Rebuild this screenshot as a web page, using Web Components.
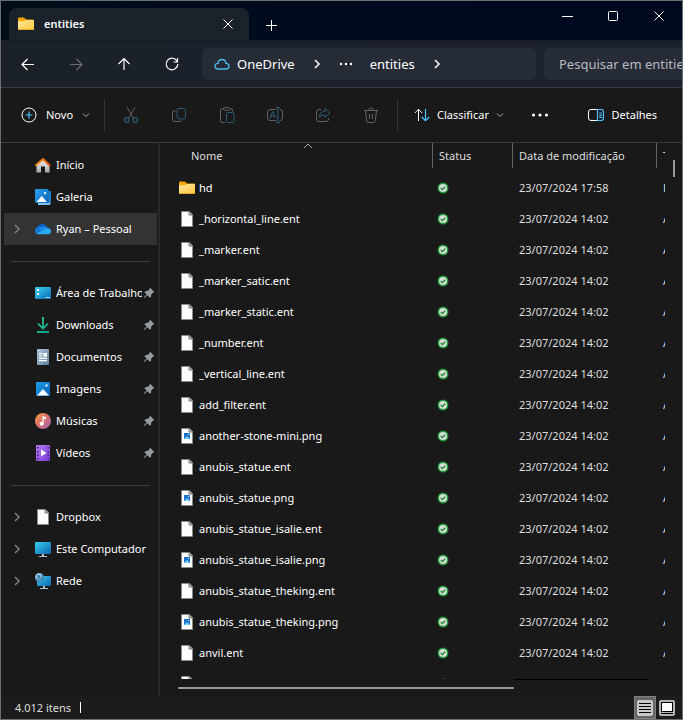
<!DOCTYPE html>
<html lang="pt-BR">
<head>
<meta charset="utf-8">
<title>entities</title>
<style>
  html, body { margin: 0; height: 100%; background: #191919; }
  body { font: 11px/16px "Noto Sans", "Open Sans", sans-serif; color: #fff; }
</style>
</head>
<body>
<explorer-window>
  <title-bar slot="title" label="entities"></title-bar>
  <address-bar slot="address"></address-bar>
  <command-bar slot="commands"></command-bar>
  <side-nav slot="side">
    <nav-item icon="home">Início</nav-item>
    <nav-item icon="gallery">Galeria</nav-item>
    <nav-item icon="onedrive" expandable selected>Ryan – Pessoal</nav-item>
    <hr>
    <nav-item icon="desktop" pinned>Área de Trabalho</nav-item>
    <nav-item icon="download" pinned>Downloads</nav-item>
    <nav-item icon="document" pinned>Documentos</nav-item>
    <nav-item icon="image" pinned>Imagens</nav-item>
    <nav-item icon="music" pinned>Músicas</nav-item>
    <nav-item icon="video" pinned>Vídeos</nav-item>
    <hr>
    <nav-item icon="file" expandable>Dropbox</nav-item>
    <nav-item icon="computer" expandable>Este Computador</nav-item>
    <nav-item icon="network" expandable>Rede</nav-item>
  </side-nav>
  <file-list slot="main"></file-list>
  <status-bar slot="status">4.012 itens</status-bar>
</explorer-window>

<script>
const ICONS = {
  folder: [16, `<defs><linearGradient id="g" x1="0" y1="0" x2="1" y2="1"><stop offset="0" stop-color="#ffe9a2"/><stop offset="1" stop-color="#ffc83a"/></linearGradient></defs><path fill="#f2a600" d="M0 2.500Q0 1.500 1 1.500H6L8 3.500H15Q16 3.500 16 4.500V8H0Z"/><path fill="url(#g)" d="M0 6Q0 5.200 1 5.200H6L7.500 4H15Q16 4 16 5V13Q16 14 15 14H1Q0 14 0 13Z"/><path stroke="#e8a92c" d="M1 13.500H15"/>`],
  close: [12, `<path d="M1.500 1.500L10.500 10.500M10.500 1.500L1.500 10.500"/>`],
  plus: [12, `<path d="M6.500 1V12M1 6.500H12"/>`],
  min: [12, `<path d="M1 6.500H12"/>`],
  max: [12, `<rect x="1.500" y="1.500" width="9" height="9" rx="1"/>`],
  back: [16, `<path stroke-width="1.200" d="M14 8.500H2.500M7.500 3L2 8.500L7.500 14"/>`],
  forward: [16, `<path stroke-width="1.200" d="M2 8.500H13.500M8.500 3L14 8.500L8.500 14"/>`],
  up: [16, `<path stroke-width="1.200" d="M8 14V2.500M2.500 8L8 2.500L13.500 8"/>`],
  refresh: [16, `<path stroke-width="1.200" d="M13.200 5.400A5.800 5.800 0 1 0 13.800 8M13.500 2V6H9.500"/>`],
  cloud: [16, `<path stroke="#4cb8f0" stroke-width="1.300" d="M4.300 13C2.300 13 1 11.800 1 10.200S2.300 7.500 4 7.400C4.300 5 6 3.500 8 3.500S11.700 5 12 7.400C13.700 7.500 15 8.600 15 10.200S13.700 13 11.700 13Z"/>`],
  right: [10, `<path stroke-width="1.500" d="M3 1L7 5L3 9"/>`],
  down: [8, `<path d="M1 2.500L4 5.500L7 2.500"/>`],
  caret: [10, `<path d="M1 7L5 3L9 7"/>`],
  dots: [16, `<g fill="currentColor" stroke="none"><circle cx="3" cy="8" r="1.200"/><circle cx="8" cy="8" r="1.200"/><circle cx="13" cy="8" r="1.200"/></g>`],
  more: [18, `<g fill="currentColor" stroke="none"><circle cx="2.500" cy="9" r="1.600"/><circle cx="9" cy="9" r="1.600"/><circle cx="15.500" cy="9" r="1.600"/></g>`],
  new: [16, `<circle cx="8" cy="8" r="7"/><path stroke="#4cc2ff" stroke-width="1.200" d="M8 4.500V11.500M4.500 8H11.500"/>`],
  cut: [16, `<path d="M4 .5L10.300 11M12 .5L5.700 11"/><g stroke="#2d5d78" stroke-width="1.200"><circle cx="3.800" cy="13" r="2.300"/><circle cx="12.200" cy="13" r="2.300"/></g>`],
  copy: [16, `<path d="M4.500 4H3Q1.500 4 1.500 5.500V12Q1.500 14.500 4 14.500H8.500Q10 14.500 10.300 13"/><rect stroke="#2d5d78" x="6" y="1.500" width="8.500" height="10.500" rx="2"/>`],
  paste: [16, `<path d="M4.500 2H2.500Q1.500 2 1.500 3V14Q1.500 15.500 3 15.500H6M11 2H12.500Q13.500 2 13.500 3V4.500"/><rect x="4.500" y=".6" width="6.500" height="2.600" rx="1.200"/><rect stroke="#2d5d78" x="7.500" y="5.500" width="7.500" height="10" rx="1.200"/>`],
  rename: [16, `<path d="M9 2.500H3Q.5 2.500 .5 5V11Q.5 13.500 3 13.500H9M12.500 2.500H13Q15.500 2.500 15.500 5V11Q15.500 13.500 13 13.500H12.500"/><path stroke="#2d5d78" d="M3 11L5.700 4.500L8.400 11M4 9H7.400M8.800 .5H12.800M8.800 15.500H12.800M10.800 .5V15.500"/>`],
  share: [16, `<path d="M6 2.500H4Q1.500 2.500 1.500 5V12Q1.500 14.500 4 14.500H11Q13.500 14.500 13.500 12V11"/><path stroke="#2d5d78" d="M10 1.500L15 6L10 10.300V8Q6 7.600 4.300 10.500Q4.800 4.800 10 4.200Z"/>`],
  trash: [16, `<path d="M1 3.500H15M5.500 3.500Q5.500 1 8 1T10.500 3.500M2.500 3.500L3.700 13.800Q3.900 15.500 5.300 15.500H10.700Q12.100 15.500 12.300 13.800L13.500 3.500M6.500 7V12M9.500 7V12"/>`],
  sort: [16, `<path d="M4.500 14V2.500M.8 6L4.500 2.300L8.200 6"/><path stroke="#4cc2ff" stroke-width="1.200" d="M11.500 2V13.500M7.800 10L11.500 13.700L15.200 10"/>`],
  details: [16, `<path d="M10 2.500H3Q.5 2.500 .5 5V11Q.5 13.500 3 13.500H10"/><path stroke="#4cc2ff" stroke-width="1.200" d="M9.500 2.500H13Q15.500 2.500 15.500 5V11Q15.500 13.500 13 13.500H9.500ZM11.200 6H14M11.200 8.200H14M11.200 10.400H14"/>`],
  home: [16, `<defs><linearGradient id="g" x2="0" y2="1"><stop stop-color="#f0f0f0"/><stop offset="1" stop-color="#a9a9a9"/></linearGradient><linearGradient id="r" x2="1"><stop stop-color="#ff9a1c"/><stop offset="1" stop-color="#d9480e"/></linearGradient></defs><path fill="url(#g)" stroke="none" d="M1.500 7.500L8 2L14.500 7.500V15.500H10V9.500H6V15.500H1.500Z"/><path stroke="url(#r)" stroke-width="2" stroke-linecap="round" stroke-linejoin="round" d="M1.200 8.300L8 2L14.800 8.300"/>`],
  gallery: [16, `<defs><linearGradient id="g" x2="1" y2="1"><stop stop-color="#2aa3ee"/><stop offset="1" stop-color="#0a62ba"/></linearGradient></defs><path fill="#7cc4f2" d="M3 14H13.500V2H15.500V14.500Q15.500 16 14 16H3Z"/><path fill="#1b7dcc" d="M13.500 2H15Q16 2 16 3V14L13.500 13Z"/><rect fill="url(#g)" width="13.500" height="14" rx="1"/><path fill="#fff" d="M1.500 13L6.800 7L12 13Z"/><circle fill="#d7f1ff" cx="10" cy="4" r="1.200"/>`],
  onedrive: [16, `<path fill="#0f62c2" d="M4 12L2 6.500Q4 3 7.500 3T12 6.500L9 11Z"/><circle fill="#1279d6" cx="3.600" cy="9.600" r="3.600"/><path fill="#1a8be6" d="M4 6.200Q8 5 12.300 6.600Q16 7.500 16 10L8 12Z"/><path fill="#2ba9f2" d="M1.500 12.500L9 8.700Q11 7.300 13 7.500Q16 8 16 10.500Q16 13.200 13 13.200H3.600Q2.200 13.200 1.500 12.500Z"/>`],
  desktop: [16, `<defs><linearGradient id="g" x2="1" y2="1"><stop stop-color="#38d3ea"/><stop offset="1" stop-color="#0d68b8"/></linearGradient></defs><rect fill="url(#g)" y="2" width="16" height="12" rx="1"/><path fill="#fff" d="M2 4H4V6H2ZM2 8H4V10H2ZM11 12H12.500V13H11ZM13.500 12H15V13H13.500Z"/>`],
  download: [16, `<defs><linearGradient id="g" gradientUnits="userSpaceOnUse" x1="0" y1="0" x2="10" y2="16"><stop stop-color="#3bd48b"/><stop offset="1" stop-color="#0ca08e"/></linearGradient></defs><path stroke="url(#g)" stroke-width="1.800" d="M8 0V11.500M3 6.500L8 11.700L13 6.500M2 15H14"/>`],
  document: [16, `<defs><linearGradient id="g" x2="1" y2="1"><stop stop-color="#b3c6d7"/><stop offset="1" stop-color="#5d7ea1"/></linearGradient></defs><rect fill="url(#g)" x="2" y="0" width="12" height="16" rx="1"/><path stroke="#fff" stroke-width="1.200" d="M4 4.600H7.500M4 7H7.500M4 9.400H12M4 11.600H12"/><rect fill="#fff" x="8.500" y="4" width="3.500" height="3.600"/>`],
  image: [16, `<defs><linearGradient id="g" x2="1" y2="1"><stop stop-color="#1ba0ea"/><stop offset="1" stop-color="#0a5eb6"/></linearGradient></defs><rect fill="url(#g)" x="1" y="1" width="14" height="14" rx="1"/><path fill="#fff" d="M2 14.500L8 8L14 14.500Z"/><circle fill="#d7f1ff" cx="11.500" cy="4.500" r="1.200"/>`],
  music: [16, `<defs><linearGradient id="g" x2="1" y2="1"><stop stop-color="#f3a04c"/><stop offset=".5" stop-color="#d9706c"/><stop offset="1" stop-color="#9a60b8"/></linearGradient></defs><circle fill="url(#g)" cx="8" cy="8" r="8"/><circle fill="#fff" cx="6.700" cy="10.700" r="2"/><path fill="#fff" d="M7.500 3L11 4.200V6.200L8.700 5.500V10.700H7.500Z"/>`],
  video: [16, `<defs><linearGradient id="g" x2="1" y2="1"><stop stop-color="#b77bf2"/><stop offset="1" stop-color="#7b3ade"/></linearGradient></defs><rect fill="url(#g)" x="1" width="14" height="16" rx="1"/><path fill="#38205e" d="M2 2H3.500V3.500H2ZM2 6H3.500V7.500H2ZM2 9.500H3.500V11H2ZM2 13H3.500V14.500H2ZM12.500 2H14V3.500H12.500ZM12.500 6H14V7.500H12.500ZM12.500 9.500H14V11H12.500ZM12.500 13H14V14.500H12.500Z"/><path fill="#fff" d="M6 4.500L11.500 8L6 11.500Z"/>`],
  file: [16, `<path fill="#fcfcfc" stroke="#8b8b86" d="M2.500 .5H10.500L13.500 3.500V15.500H2.500Z"/><path fill="#ccc" stroke="#77776f" d="M10 .5V4H13.500Z"/>`],
  png: [16, `<path fill="#fcfcfc" stroke="#8b8b86" d="M2.500 .5H10.500L13.500 3.500V15.500H2.500Z"/><path fill="#ccc" stroke="#77776f" d="M10 .5V4H13.500Z"/><rect fill="#1e72cc" stroke="none" x="5" y="5" width="6" height="6"/><path fill="#7cd1fa" stroke="none" d="M5 11L8 8L11 11Z"/><rect fill="#c9edff" stroke="none" x="9" y="6" width="1" height="1"/>`],
  computer: [16, `<defs><linearGradient id="g" x2="1" y2="1"><stop stop-color="#35d0ea"/><stop offset="1" stop-color="#0f62b4"/></linearGradient></defs><rect fill="url(#g)" y="1" width="16" height="12" rx="1"/><path fill="#b7c3cc" d="M7 13H9V15H12V16H4V15H7Z"/>`],
  network: [16, `<defs><linearGradient id="g" x2="1" y2="1"><stop stop-color="#35d0ea"/><stop offset="1" stop-color="#0f62b4"/></linearGradient><radialGradient id="r" cx=".35" cy=".3"><stop stop-color="#e6f6ff"/><stop offset="1" stop-color="#4a8db8"/></radialGradient></defs><rect fill="url(#g)" x="2" y="3" width="14" height="10" rx="1"/><path fill="#b7c3cc" d="M8 13H10V15H13V16H5V15H8Z"/><circle fill="url(#r)" cx="4.500" cy="4.500" r="4.500"/><path fill="#317aa9" d="M2 2Q4 1 5 3T3 6ZM6 5L8 4L7 7Z"/>`],
  pin: [12, `<path fill="#929a9f" d="M7.200 .8L11.300 4.900L10 5.700L8.400 7.200L7.800 10.200L6.800 10.800L4.400 8.300L1.200 11.300L.6 10.700L3.700 7.600L1.500 5.300L2.200 4.300L5 3.700L6.500 2.100Z"/>`],
  ok: [12, `<circle fill="#1f9636" cx="6" cy="6" r="5.500"/><circle fill="#d6dcd6" cx="6" cy="6" r="4"/><path stroke="#16852d" stroke-width="1.300" d="M3.800 6L5.400 7.600L8.200 4.700"/>`],
  lines: [16, `<rect fill="#c8c8c8" width="16" height="16" rx="2"/><path stroke="#000" d="M2 3.500H14M2 6.500H14M2 9.500H14M2 12.500H14"/>`],
  thumb: [16, `<rect fill="#b4b4b4" width="16" height="16" rx="2"/><rect fill="#fff" stroke="#000" x="2.500" y="2.500" width="11" height="9"/><path stroke="#000" d="M2 13.500H14"/>`]
};
const FILLED = /^(folder|gallery|onedrive|desktop|document|image|music|video|computer|network|pin|ok|lines|thumb)$/;

const BASE = `
  :host, * { box-sizing: border-box; }
  button { display: flex; align-items: center; justify-content: center; margin: 0; padding: 0;
    border: 0; background: none; color: inherit; font: inherit; flex: none; }
`;

class BaseElement extends HTMLElement {
  connectedCallback() {
    if (this.shadowRoot) return;
    const template = document.createElement('template');
    template.innerHTML = `<style>${BASE}${this.styles()}</style>${this.markup()}`;
    this.attachShadow({ mode: 'open' }).append(template.content.cloneNode(true));
  }
}

customElements.define('ui-icon', class extends BaseElement {
  styles() { return `:host { display: block; flex: none; } svg { display: block; fill: none; overflow: visible; }`; }
  markup() {
    const name = this.getAttribute('name');
    const [size, body] = ICONS[name];
    const stroke = FILLED.test(name) ? 'none' : 'currentColor';
    return `<svg width="${size}" height="${size}" viewBox="0 0 ${size} ${size}" stroke="${stroke}" aria-hidden="true">${body}</svg>`;
  }
});

customElements.define('explorer-window', class extends BaseElement {
  styles() { return `
    :host { display: flex; flex-direction: column; height: 100vh;
      border: 1px solid #6c6e70; background: #191919; overflow: hidden; }
    .body { display: flex; flex: 1; min-height: 0; }
    ::slotted([slot=main]) { flex: 1; min-width: 0; }`; }
  markup() { return `<slot name="title"></slot><slot name="address"></slot><slot name="commands"></slot>
    <div class="body"><slot name="side"></slot><slot name="main"></slot></div><slot name="status"></slot>`; }
});

customElements.define('title-bar', class extends BaseElement {
  styles() { return `
    :host { display: flex; flex: none; height: 39px; padding-left: 8px; background: linear-gradient(90deg, #000e1b, #000820 70%); }
    .tab { display: flex; align-items: center; align-self: flex-end; width: 240px; height: 32px; padding: 0 15px 0 9px;
      border-radius: 8px 8px 0 0; background: #1b2229; font-weight: 600; }
    .tab span { flex: 1; padding-left: 10px; }
    .add { width: 44px; padding-top: 8px; }
    .caption { display: flex; margin-left: auto; height: 29px; }
    .caption button { width: 46px; }`; }
  markup() { return `
    <div class="tab"><ui-icon name="folder"></ui-icon><span>${this.getAttribute('label')}</span><button aria-label="Fechar guia"><ui-icon name="close"></ui-icon></button></div>
    <button class="add" aria-label="Nova guia"><ui-icon name="plus"></ui-icon></button>
    <div class="caption">
      <button aria-label="Minimizar"><ui-icon name="min"></ui-icon></button>
      <button aria-label="Maximizar"><ui-icon name="max"></ui-icon></button>
      <button aria-label="Fechar"><ui-icon name="close"></ui-icon></button>
    </div>`; }
});

customElements.define('address-bar', class extends BaseElement {
  styles() { return `
    :host { display: flex; flex: none; align-items: center; height: 48px; padding-left: 3px; overflow: hidden;
      background: linear-gradient(90deg, #1a2128, #1b202e); border-top: 1px solid #151b25; border-bottom: 1px solid #3a3b3d; font-size: 13px; line-height: 20px; }
    .nav { width: 48px; height: 32px; }
    .nav[disabled] { color: #686d74; }
    .path, .search { height: 32px; border-radius: 5px; background: #262c36; }
    .path { display: flex; align-items: center; flex: 1 0 334px; margin: 0 8px 0 6px; padding-left: 12px; }
    .path ui-icon[name=cloud] { margin-right: 7px; }
    .step { width: 44px; }
    .dots { width: 14px; margin-right: 17px; }
    .search { flex: none; width: 240px; padding: 0 15px; border: 0; color: #fff; font: inherit; }
    .search::placeholder { color: #b9bbc0; opacity: 1; }`; }
  markup() { return `
    <button class="nav" aria-label="Voltar"><ui-icon name="back"></ui-icon></button>
    <button class="nav" disabled aria-label="Avançar"><ui-icon name="forward"></ui-icon></button>
    <button class="nav" aria-label="Acima"><ui-icon name="up"></ui-icon></button>
    <button class="nav" aria-label="Atualizar"><ui-icon name="refresh"></ui-icon></button>
    <div class="path">
      <ui-icon name="cloud"></ui-icon><button>OneDrive</button>
      <button class="step" aria-label="Expandir OneDrive"><ui-icon name="right"></ui-icon></button>
      <button class="dots" aria-label="Mais pastas"><ui-icon name="dots"></ui-icon></button>
      <button>entities</button>
      <button class="step" aria-label="Expandir entities"><ui-icon name="right"></ui-icon></button>
    </div>
    <input class="search" type="search" aria-label="Pesquisar em entities" placeholder="Pesquisar em entities">`; }
});

customElements.define('command-bar', class extends BaseElement {
  styles() { return `
    :host { display: flex; flex: none; align-items: center; height: 55px; background: #191919; border-bottom: 1px solid #3b3b3b; }
    button { height: 32px; }
    .new { width: 103px; justify-content: flex-start; padding-left: 20px; gap: 9px; }
    .tool { width: 48px; }
    .tool[disabled] { color: #626262; }
    .rule { width: 1px; height: 32px; margin: 0 2px; background: #333; }
    .new + .rule { margin-left: 0; }
    .sort { gap: 7px; padding: 0 12px 0 14px; }
    .details { margin-left: auto; gap: 8px; padding-right: 25px; }
    ui-icon[name=down] { color: #aaa; }`; }
  markup() {
    const tools = [['cut', 'Recortar'], ['copy', 'Copiar'], ['paste', 'Colar'], ['rename', 'Renomear'], ['share', 'Compartilhar'], ['trash', 'Excluir']];
    return `
    <button class="new"><ui-icon name="new"></ui-icon>Novo<ui-icon name="down"></ui-icon></button><div class="rule"></div>
    ${tools.map(([icon, label]) => `<button class="tool" disabled aria-label="${label}"><ui-icon name="${icon}"></ui-icon></button>`).join('')}
    <div class="rule"></div>
    <button class="sort"><ui-icon name="sort"></ui-icon>Classificar<ui-icon name="down"></ui-icon></button>
    <button class="tool" aria-label="Ver mais"><ui-icon name="more"></ui-icon></button>
    <button class="details"><ui-icon name="details"></ui-icon>Detalhes</button>`; }
});

customElements.define('side-nav', class extends BaseElement {
  styles() { return `
    :host { display: block; flex: none; width: 159px; border-right: 2px solid #292929; overflow: hidden; }
    nav { padding: 6px 1px 0 3px; }
    ::slotted(hr) { height: 1px; margin: 16px 7px 15px; border: 0; background: #3d3d3d; }`; }
  markup() { return `<nav aria-label="Navegação"><slot></slot></nav>`; }
});

customElements.define('nav-item', class extends BaseElement {
  styles() { return `
    :host { display: block; }
    a { display: flex; align-items: center; height: 32px; padding-right: 2px; color: inherit; text-decoration: none; }
    :host([selected]) a { background: #333; }
    .twist { width: 31px; padding-left: 8px; flex: none; color: #7d7d7d; }
    .label { flex: 1; min-width: 0; margin-left: 5px; overflow: hidden; white-space: nowrap; }
    ui-icon[name=pin] { margin-left: 1px; }`; }
  markup() {
    const twist = this.hasAttribute('expandable') ? '<ui-icon name="right"></ui-icon>' : '';
    const pin = this.hasAttribute('pinned') ? '<ui-icon name="pin"></ui-icon>' : '';
    return `<a href="#"><span class="twist">${twist}</span><ui-icon name="${this.getAttribute('icon')}"></ui-icon><span class="label"><slot></slot></span>${pin}</a>`; }
});

const FILES = ['hd', '_horizontal_line.ent', '_marker.ent', '_marker_satic.ent', '_marker_static.ent', '_number.ent',
  '_vertical_line.ent', 'add_filter.ent', 'another-stone-mini.png', 'anubis_statue.ent', 'anubis_statue.png',
  'anubis_statue_isalie.ent', 'anubis_statue_isalie.png', 'anubis_statue_theking.ent', 'anubis_statue_theking.png',
  'anvil.ent', ''];

customElements.define('file-list', class extends BaseElement {
  styles() { return `
    :host { display: grid; grid-template-columns: minmax(0, 1fr) 17px; grid-template-rows: minmax(0, 1fr) 17px; }
    .view { overflow: hidden; }
    table { width: 600px; table-layout: fixed; border-collapse: collapse; color: #dedede; }
    th { height: 29px; padding: 0; font-weight: 400; text-align: left; vertical-align: top; }
    th div { position: relative; height: 25px; padding: 5px 0 0 6px; border-left: 1px solid #636363; }
    th:first-child div { padding-left: 31px; border: 0; }
    th ui-icon { position: absolute; left: 50%; top: -2px; margin-left: 7px; color: #aaa; }
    td { height: 31px; padding: 0 0 0 7px; white-space: nowrap; }
    td:first-child { padding-left: 19px; color: #fff; }
    .name { display: flex; align-items: center; gap: 4px; }
    td ui-icon[name=ok] { margin-left: -2px; }
    .v { padding-top: 17px; }
    .v div { width: 2px; height: 17px; margin-left: 8px; background: #9a9a9a; }
    .h { padding: 8px 0 0 18px; background: linear-gradient(#000, #000) right 17px top / 134px 1px no-repeat; }
    .h div { width: 69%; height: 2px; border-radius: 1px; background: #9a9a9a; }`; }
  markup() {
    const row = name => {
      const dir = name === 'hd';
      const ext = name.endsWith('.png') ? 'PNG' : 'ENT';
      const icon = dir ? 'folder' : ext === 'PNG' ? 'png' : 'file';
      const date = !name ? '' : dir ? '23/07/2024 17:58' : '23/07/2024 14:02';
      const type = !name ? '' : dir ? 'Pasta de arquivos' : 'Arquivo ' + ext;
      return `<tr><td><div class="name"><ui-icon name="${icon}"></ui-icon>${name}</div></td><td><ui-icon name="ok"></ui-icon></td><td>${date}</td><td>${type}</td></tr>`;
    };
    return `
    <div class="view"><table>
      <colgroup><col style="width:272px"><col style="width:80px"><col style="width:144px"><col></colgroup>
      <thead><tr><th><div>Nome<ui-icon name="caret"></ui-icon></div></th><th><div>Status</div></th><th><div>Data de modificação</div></th><th><div>Tipo</div></th></tr></thead>
      <tbody>${FILES.map(row).join('')}</tbody>
    </table></div>
    <div class="v"><div></div></div>
    <div class="h"><div></div></div>`; }
});

customElements.define('status-bar', class extends BaseElement {
  styles() { return `
    :host { display: flex; flex: none; align-items: center; height: 23px; padding: 0 7px 0 14px; background: #1c1c1c; color: #dedede; }
    .bar { width: 1px; height: 11px; margin-left: 9px; background: #fff; }
    button { width: 22px; height: 23px; }
    .on { margin-left: auto; border: 1px solid #808080; background: #666; }
    .big { width: 16px; margin-left: 3px; }`; }
  markup() { return `<span><slot></slot></span><span class="bar"></span>
    <button class="on" aria-label="Detalhes"><ui-icon name="lines"></ui-icon></button>
    <button class="big" aria-label="Ícones grandes"><ui-icon name="thumb"></ui-icon></button>`; }
});
</script>
</body>
</html>
